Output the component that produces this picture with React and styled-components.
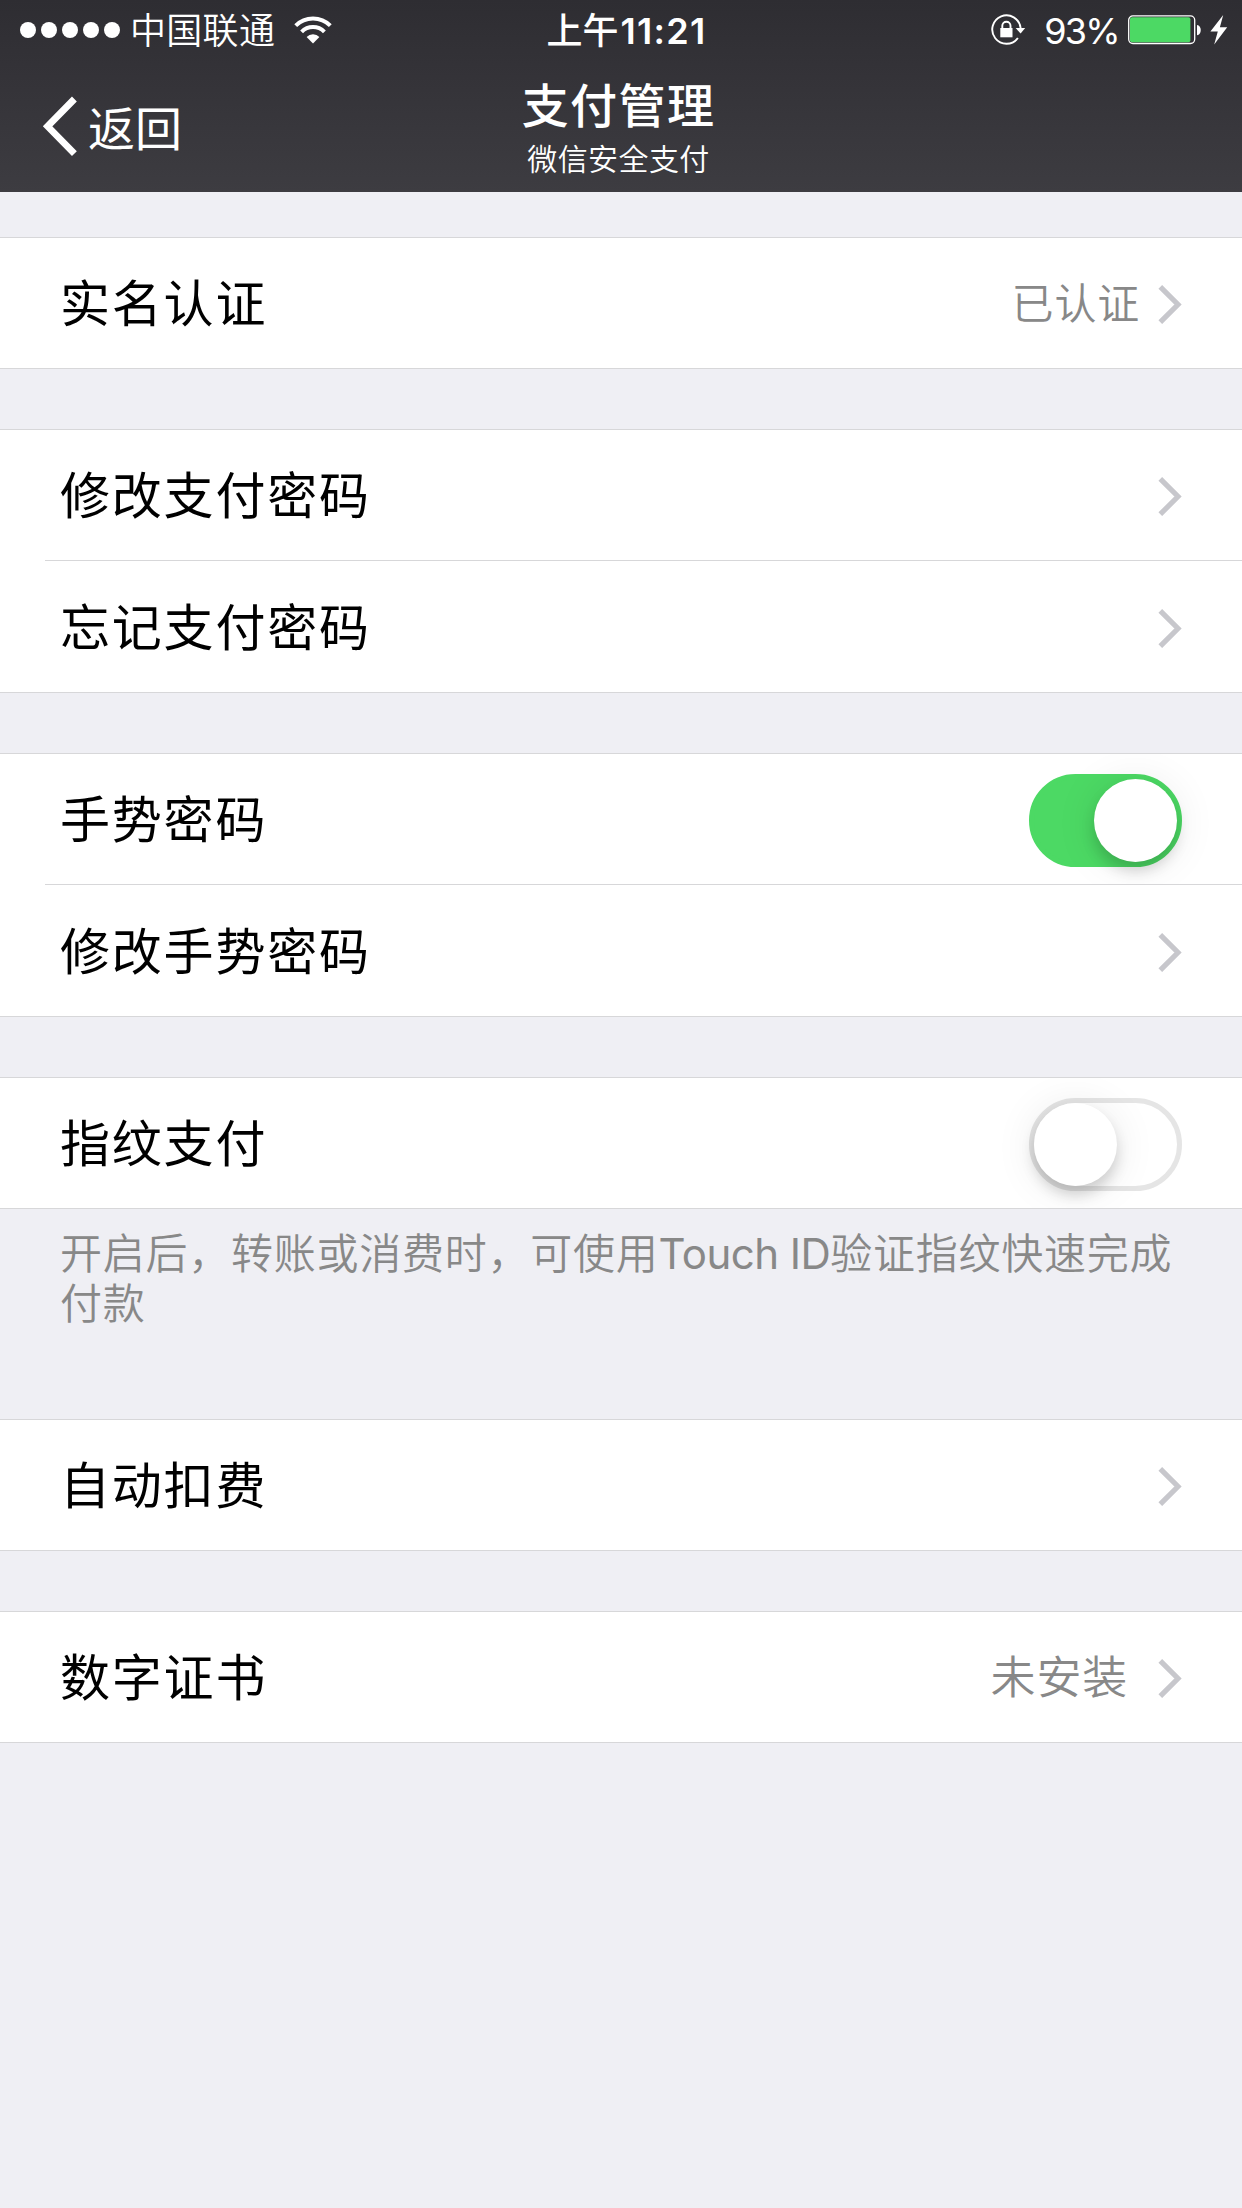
import React from 'react'
import styled, { createGlobalStyle } from 'styled-components'

const GlobalStyle = createGlobalStyle`
  * {
    box-sizing: border-box;
  }
  body {
    margin: 0;
    background: #efeff4;
    font-family: Inter, 'Noto Sans CJK SC', sans-serif;
  }
`

const Page = styled.div`
  width: 1242px;
  min-height: 2208px;
  background: #efeff4;
  color: #000;
`

const Header = styled.header`
  height: 192px;
  background: linear-gradient(#2e2d32, #3d3c41);
  color: #fff;
`

const StatusBar = styled.div`
  display: grid;
  grid-template-columns: 1fr auto 1fr;
  align-items: center;
  height: 62px;
  padding: 0 14px 0 20px;
  font-size: 36px;
  line-height: 62px;

  svg {
    margin-bottom: 2px;
  }
`

const StatusLeft = styled.div`
  display: flex;
  align-items: center;
`

const StatusRight = styled.div`
  display: flex;
  align-items: center;
  justify-content: flex-end;
`

const Signal = styled.div`
  display: flex;
  gap: 5px;
  margin-top: -2px;
`

const Dot = styled.span`
  width: 16px;
  height: 16px;
  border-radius: 50%;
  background: #fff;
`

const Carrier = styled.span`
  margin: 0 19px 0 10px;
  font-weight: 350;
  letter-spacing: 0.3px;
`

const Time = styled.span`
  padding-left: 5px;
  font-weight: 500;
`

const Clock = styled.span`
  margin-left: 2px;
  font-weight: 600;
  letter-spacing: 1.3px;
`

const Percent = styled.span`
  margin: 0 9px 0 18px;
  letter-spacing: -1.7px;
`

const NavBar = styled.div`
  display: grid;
  grid-template-columns: 1fr auto 1fr;
  height: 130px;
  padding: 0 45px 0 40px;
`

const Back = styled.div`
  display: flex;
  align-items: center;
  gap: 8px;
  height: 130px;
  font-size: 47px;
  line-height: 60px;
`

const BackText = styled.span`
  padding-top: 3px;
`

const Heading = styled.div`
  padding-top: 16px;
  text-align: center;
`

const Title = styled.h1`
  margin: 0;
  font-size: 47px;
  font-weight: 500;
  line-height: 56px;
  letter-spacing: 1.4px;
`

const Subtitle = styled.div`
  margin-top: 7px;
  font-size: 30px;
  font-weight: 350;
  line-height: 36px;
  letter-spacing: 0.4px;
`

const Group = styled.section`
  margin-top: ${(props) => props.$gap || 60}px;
  border-top: 1px solid #d7d7d9;
  border-bottom: 1px solid #d7d7d9;
  background: #fff;
`

const Row = styled.div`
  display: flex;
  align-items: center;
  height: 130px;
  padding: 0 60px;
  overflow: hidden;

  & ~ & {
    height: 131px;
  }
`

const Divider = styled.div`
  height: 1px;
  margin-left: 45px;
  background: #d7d7d9;
`

const Label = styled.span`
  flex: 1;
  padding-top: 2px;
  font-size: 50px;
  line-height: 70px;
  letter-spacing: 1.8px;
`

const Value = styled.span`
  margin-right: ${(props) => (props.$large ? 30 : 18)}px;
  padding-top: 2px;
  color: #888;
  font-size: ${(props) => (props.$large ? 45 : 42)}px;
  font-weight: 350;
  line-height: 60px;
  letter-spacing: 0.8px;
`

const Note = styled.p`
  margin: 0;
  height: 150px;
  padding: 20px 60px 0;
  color: #888;
  font-size: 42px;
  font-weight: 350;
  line-height: 50px;
  letter-spacing: 0.75px;
`

const Latin = styled.span`
  font-weight: 400;
  letter-spacing: -0.55px;
`

const Track = styled.div`
  display: flex;
  justify-content: ${(props) => (props.$on ? 'flex-end' : 'flex-start')};
  width: 153px;
  height: 93px;
  margin-top: 3px;
  border: 5px solid ${(props) => (props.$on ? '#4cd964' : '#e5e5e5')};
  border-radius: 47px;
  background: ${(props) => (props.$on ? '#4cd964' : '#fff')};
`

const Knob = styled.div`
  width: 83px;
  height: 83px;
  border-radius: 50%;
  background: #fff;
  box-shadow: 0 9px 14px rgba(0, 0, 0, 0.16), 0 3px 44px rgba(0, 0, 0, 0.09);
`

const Switch = ({ on }) => (
  <Track $on={on} role="switch" aria-checked={on}>
    <Knob />
  </Track>
)

const Chevron = () => (
  <svg width="24" height="42" viewBox="0 0 24 42" fill="none">
    <path d="M2.3 4.8L20 22.5L2.3 40.2" stroke="#c7c7cc" strokeWidth="5.2" />
  </svg>
)

const BackIcon = () => (
  <svg width="40" height="62" viewBox="0 0 40 62" fill="none">
    <path d="M34.4 3L7.6 30.3L34.4 57.6" stroke="#fff" strokeWidth="6.8" />
  </svg>
)

const WifiIcon = () => (
  <svg width="38" height="28" viewBox="0 0 38 28" fill="none">
    <g stroke="#fff" strokeWidth="4">
      <path d="M1.7 9.6A24.5 24.5 0 0 1 36.3 9.6" />
      <path d="M7.6 15.8A16 16 0 0 1 30.4 15.8" />
    </g>
    <path d="M19 27.5L12.6 20.9A9 9 0 0 1 25.4 20.9Z" fill="#fff" />
  </svg>
)

const RotationLockIcon = () => (
  <svg width="35" height="32" viewBox="0 0 35 32" fill="none">
    <path
      d="M29.6 14A14.2 14.2 0 1 0 26.9 24"
      stroke="#fff"
      strokeWidth="1.9"
    />
    <path d="M24.6 14H34.2L29.6 19.4Z" fill="#fff" />
    <path
      d="M11.3 15V11.8A4.1 4.1 0 0 1 19.5 11.8V15"
      stroke="#fff"
      strokeWidth="1.9"
    />
    <rect x="9.3" y="14" width="12.2" height="9.3" fill="#fff" />
  </svg>
)

const BatteryIcon = () => (
  <svg width="74" height="30" viewBox="0 0 74 30" fill="none">
    <rect
      x="0.7"
      y="0.9"
      width="66"
      height="27.6"
      rx="4.2"
      stroke="#fff"
      strokeWidth="1.3"
    />
    <rect x="2" y="2.2" width="60.4" height="25" rx="2" fill="#4cd964" />
    <path d="M69 10C74 10.6 74 19.6 69 20.3Z" fill="#fff" />
  </svg>
)

const BoltIcon = () => (
  <svg width="18" height="30" viewBox="0 0 18 30">
    <path d="M13.2 0L0.4 16.6H7.8L4.2 29.6L17.2 12.2H9.9Z" fill="#fff" />
  </svg>
)

const BoltSlot = styled.span`
  display: flex;
  margin-left: 8px;
`

const App = () => (
  <Page>
    <GlobalStyle />
    <Header>
      <StatusBar>
        <StatusLeft>
          <Signal>
            <Dot />
            <Dot />
            <Dot />
            <Dot />
            <Dot />
          </Signal>
          <Carrier>中国联通</Carrier>
          <WifiIcon />
        </StatusLeft>
        <Time>
          上午<Clock>11:21</Clock>
        </Time>
        <StatusRight>
          <RotationLockIcon />
          <Percent>93%</Percent>
          <BatteryIcon />
          <BoltSlot>
            <BoltIcon />
          </BoltSlot>
        </StatusRight>
      </StatusBar>
      <NavBar>
        <Back>
          <BackIcon />
          <BackText>返回</BackText>
        </Back>
        <Heading>
          <Title>支付管理</Title>
          <Subtitle>微信安全支付</Subtitle>
        </Heading>
      </NavBar>
    </Header>

    <Group $gap={45}>
      <Row>
        <Label>实名认证</Label>
        <Value>已认证</Value>
        <Chevron />
      </Row>
    </Group>

    <Group>
      <Row>
        <Label>修改支付密码</Label>
        <Chevron />
      </Row>
      <Divider />
      <Row>
        <Label>忘记支付密码</Label>
        <Chevron />
      </Row>
    </Group>

    <Group>
      <Row>
        <Label>手势密码</Label>
        <Switch on />
      </Row>
      <Divider />
      <Row>
        <Label>修改手势密码</Label>
        <Chevron />
      </Row>
    </Group>

    <Group>
      <Row>
        <Label>指纹支付</Label>
        <Switch on={false} />
      </Row>
    </Group>
    <Note>
      开启后，转账或消费时，可使用<Latin>Touch ID</Latin>
      验证指纹快速完成付款
    </Note>

    <Group>
      <Row>
        <Label>自动扣费</Label>
        <Chevron />
      </Row>
    </Group>

    <Group>
      <Row>
        <Label>数字证书</Label>
        <Value $large>未安装</Value>
        <Chevron />
      </Row>
    </Group>
  </Page>
)

export default App
